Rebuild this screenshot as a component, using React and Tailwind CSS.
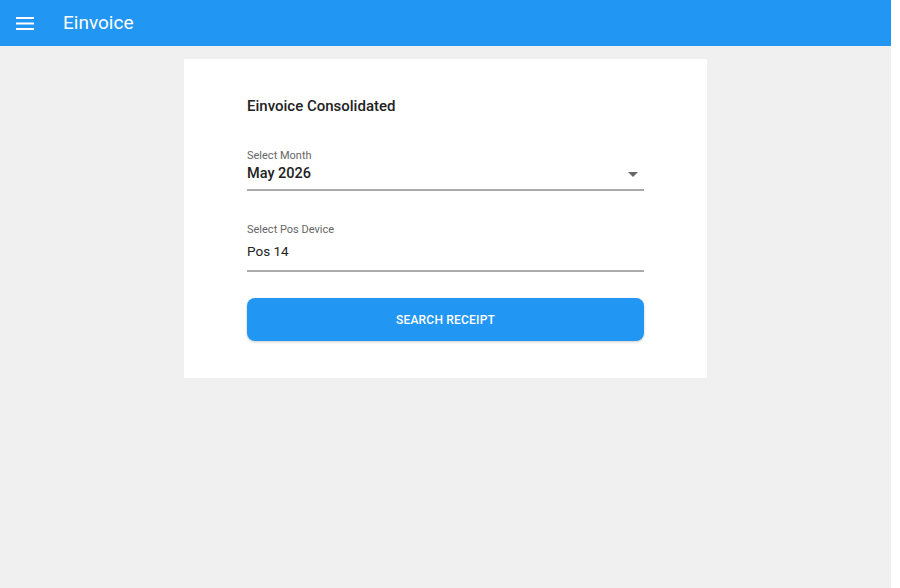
import React, { useState } from 'react';

export default function App() {
  const [month] = useState('May 2026');
  const [pos, setPos] = useState('Pos 14');

  return (
    <div className="min-h-screen bg-white font-['Roboto',sans-serif]">
      <div className="w-[891px] min-h-[588px] bg-[#f0f0f0]">
        <header className="h-[46px] bg-[#2196f3] flex items-center text-white">
          <button className="ml-[16px] w-[18px] h-[20px] flex items-center justify-center">
            <svg width="18" height="13" viewBox="0 0 18 13" fill="white">
              <rect x="0" y="0" width="18" height="2" />
              <rect x="0" y="5.5" width="18" height="2" />
              <rect x="0" y="11" width="18" height="2" />
            </svg>
          </button>
          <h1 className="ml-[29px] text-[19px] leading-none -mt-[2px]">Einvoice</h1>
        </header>

        <div className="pt-[13px] pl-[184px]">
          <div className="w-[523px] h-[319px] bg-white px-[63px] pt-[38px]">
            <h2 className="text-[15px] font-medium text-[#222] leading-[18px]">Einvoice Consolidated</h2>

            <div className="mt-[34px]">
              <label className="block text-[11px] text-[#666] leading-[14px]">Select Month</label>
              <div className="flex items-start justify-between h-[25px] mt-[1px] border-b-2 border-[#aaa] box-content">
                <span className="text-[14.5px] leading-[20px] font-medium text-[#222]">{month}</span>
                <svg width="10" height="5" viewBox="0 0 10 5" className="mr-[6px] mt-[8px]">
                  <path d="M0 0 L10 0 L5 5 Z" fill="#666" />
                </svg>
              </div>
            </div>

            <div className="mt-[32px]">
              <label className="block text-[11px] text-[#666] leading-[14px]">Select Pos Device</label>
              <input
                value={pos}
                onChange={(e) => setPos(e.target.value)}
                className="block w-full mt-[4px] pb-[9px] text-[13.5px] text-[#222] border-b-2 border-[#aaa] outline-none bg-transparent"
              />
            </div>

            <button className="mt-[26px] w-full h-[43px] rounded-[8px] bg-[#2196f3] text-white text-[12px] font-medium tracking-[0.2px] shadow-[0_1px_3px_rgba(0,0,0,0.2)]">
              SEARCH RECEIPT
            </button>
          </div>
        </div>
      </div>
    </div>
  );
}
